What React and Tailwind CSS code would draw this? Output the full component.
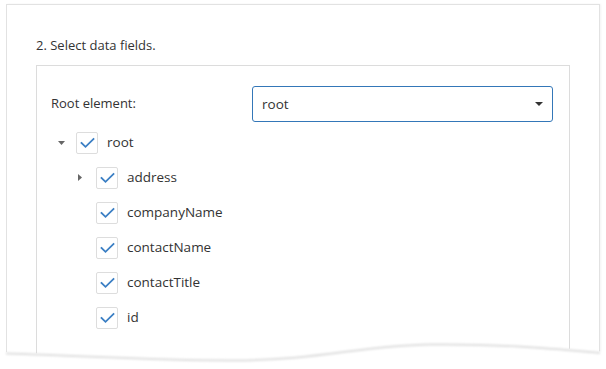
const FIELDS = ['companyName', 'contactName', 'contactTitle', 'id']

function Check() {
  return (
    <span className="flex h-[22px] w-[22px] shrink-0 items-center justify-center rounded-[2px] border border-[#dddddd] bg-white">
      <svg width="15" height="12" viewBox="0 0 15 12" fill="none">
        <path d="M1.5 6l4 3.8L13.5 2" stroke="#3b7fc4" strokeWidth="1.8" strokeLinecap="square" />
      </svg>
    </span>
  )
}

function Caret({ open }) {
  return (
    <span className="flex w-[20px] shrink-0 items-center pl-[2px]">
      {open ? (
        <svg width="7" height="4" viewBox="0 0 7 4"><path d="M0 0h7L3.5 4z" fill="#666" /></svg>
      ) : (
        <svg width="4" height="7" viewBox="0 0 4 7"><path d="M0 0v7l4-3.5z" fill="#666" /></svg>
      )}
    </span>
  )
}

function Row({ label, caret, open, indent }) {
  return (
    <div className={`flex h-[35px] items-center ${indent ? 'pl-[20px]' : ''}`}>
      {caret ? <Caret open={open} /> : <span className="w-[20px] shrink-0" />}
      <Check />
      <span className="ml-[9px] text-[13.5px] text-[#333]">{label}</span>
    </div>
  )
}

export default function App() {
  return (
    <div className="relative h-[369px] overflow-hidden bg-white font-['Open_Sans',sans-serif] text-[#333]">
      <div className="px-[6px] pt-[4px]">
        <div className="h-[380px] border border-[#e2e2e2] pl-[29px] pr-[29px] pt-[28px] shadow-[1px_0_2px_rgba(0,0,0,0.05)]">
          <div className="text-[13px] leading-[24px]">2. Select data fields.</div>
          <div className="mt-[8px] h-[320px] border border-[#dcdcdc] px-[14px] pt-[20px]">
            <div className="flex items-center">
              <span className="w-[201px] text-[13px]">Root element:</span>
              <div className="flex h-[36px] w-[301px] items-center justify-between rounded-[3px] border border-[#3477b8] pl-[9px] pr-[9px]">
                <span className="text-[13.5px]">root</span>
                <svg width="8" height="4" viewBox="0 0 8 4"><path d="M0 0h8L4 4z" fill="#333" /></svg>
              </div>
            </div>
            <div className="mt-[3px] pl-[5px]">
              <Row label="root" caret open />
              <Row label="address" caret indent />
              {FIELDS.map((f) => (
                <Row key={f} label={f} indent />
              ))}
            </div>
          </div>
        </div>
      </div>
      <svg className="absolute left-0 top-[330px]" width="606" height="39" viewBox="0 330 606 39">
        <defs>
          <filter id="blur" x="-5%" y="-50%" width="110%" height="200%">
            <feGaussianBlur stdDeviation="1.2" />
          </filter>
        </defs>
        <path
          d="M0 352 C100 355 150 359 230 359 C320 359 360 344 430 343 C500 342 560 348 606 352 L606 369 L0 369 Z"
          fill="#fff"
        />
        <path
          d="M6 353.5 C100 356.5 150 360.5 230 360.5 C320 360.5 360 345.5 430 344.5 C500 343.5 560 349.5 600 353"
          fill="none"
          stroke="#dedede"
          strokeWidth="2"
          filter="url(#blur)"
        />
      </svg>
    </div>
  )
}
